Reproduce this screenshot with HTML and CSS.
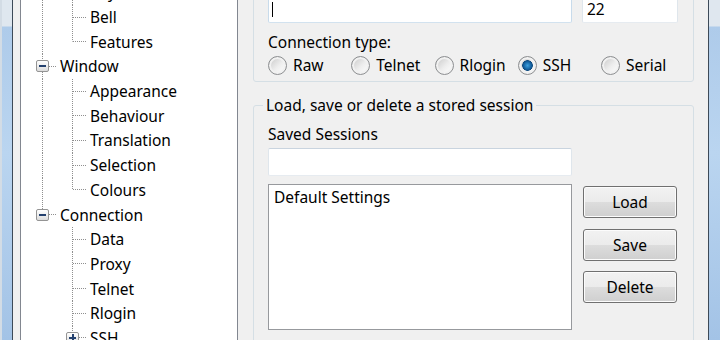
FILE: index.html
```html
<!DOCTYPE html>
<html lang="en">

<head>
    <meta charset="UTF-8">
    <meta name="viewport" content="width=device-width, initial-scale=1.0">
    <title>PuTTY Configuration</title>
    <link rel="stylesheet" href="styles.css">
</head>

<body>
    <div class="window">
        <div class="frame frame-left"></div>
        <div class="dialog">
            <ul class="tree">
                <li class="row"><span class="ln i"></span><span class="ln t"></span><span class="label">Keyboard</span></li>
                <li class="row"><span class="ln i"></span><span class="ln t"></span><span class="label">Bell</span></li>
                <li class="row"><span class="ln i"></span><span class="ln l"></span><span class="label">Features</span></li>
                <li class="row"><span class="ln t node"><span class="exp"></span></span><span class="label">Window</span></li>
                <li class="row"><span class="ln i"></span><span class="ln t"></span><span class="label">Appearance</span></li>
                <li class="row"><span class="ln i"></span><span class="ln t"></span><span class="label">Behaviour</span></li>
                <li class="row"><span class="ln i"></span><span class="ln t"></span><span class="label">Translation</span></li>
                <li class="row"><span class="ln i"></span><span class="ln t"></span><span class="label">Selection</span></li>
                <li class="row"><span class="ln i"></span><span class="ln l"></span><span class="label">Colours</span></li>
                <li class="row"><span class="ln l node"><span class="exp"></span></span><span class="label">Connection</span></li>
                <li class="row"><span class="ln"></span><span class="ln t"></span><span class="label">Data</span></li>
                <li class="row"><span class="ln"></span><span class="ln t"></span><span class="label">Proxy</span></li>
                <li class="row"><span class="ln"></span><span class="ln t"></span><span class="label">Telnet</span></li>
                <li class="row"><span class="ln"></span><span class="ln t"></span><span class="label">Rlogin</span></li>
                <li class="row"><span class="ln"></span><span class="ln t node"><span class="exp closed"></span></span><span class="label">SSH</span></li>
                <li class="row"><span class="ln"></span><span class="ln l"></span><span class="label">Serial</span></li>
            </ul>

            <div class="config">
                <div class="group">
                    <div class="fields">
                        <div class="field host"><span class="caret"></span></div>
                        <div class="field port">22</div>
                    </div>
                    <div class="caption">Connection type:</div>
                    <div class="radios">
                        <label class="opt"><span class="radio"></span>Raw</label>
                        <label class="opt"><span class="radio"></span>Telnet</label>
                        <label class="opt"><span class="radio"></span>Rlogin</label>
                        <label class="opt"><span class="radio on"></span>SSH</label>
                        <label class="opt"><span class="radio"></span>Serial</label>
                    </div>
                </div>

                <fieldset class="group sessions">
                    <legend>Load, save or delete a stored session</legend>
                    <div class="caption">Saved Sessions</div>
                    <div class="field"></div>
                    <div class="session-row">
                        <ul class="list">
                            <li>Default Settings</li>
                        </ul>
                        <div class="buttons">
                            <button>Load</button>
                            <button>Save</button>
                            <button>Delete</button>
                        </div>
                    </div>
                </fieldset>
            </div>
        </div>
        <div class="frame frame-right"></div>
    </div>
</body>

</html>
```

FILE: styles.css
```css
body {
    font-family: 'Noto Sans', 'Open Sans', sans-serif;
    font-size: 15.5px;
    color: #000;
    margin: 0;
    width: 720px;
    height: 340px;
    overflow: hidden;
    background: #f0f0f0;
}

.window {
    display: flex;
    height: 340px;
}

/* aero glass edges of the window */
.frame {
    flex: none;
    background: linear-gradient(to bottom, #dfe7ef 0, #dfe7ef 26px, #aecbea 27px, #bad5f0 45%, #a3c3e6 100%);
}

.frame-left {
    width: 12px;
    border-right: 1px solid #3d4a58;
    box-shadow: inset 2px 0 #d3dce5;
}

.frame-right {
    width: 11px;
    border-left: 1px solid #3d4a58;
}

.dialog {
    flex: 1;
    display: flex;
    align-items: flex-start;
    padding-left: 7px;
    background: #f0f0f0;
}

/* category tree */
.tree {
    --dot-v: repeating-linear-gradient(to bottom, #8f8f8f 0 1px, transparent 1px 2px);
    --dot-h: repeating-linear-gradient(to right, #8f8f8f 0 1px, transparent 1px 2px);
    box-sizing: border-box;
    width: 218px;
    height: 420px;
    margin: -21px 0 0;
    padding: 0 0 0 6px;
    list-style: none;
    background: #fff;
    border: 1px solid #828790;
}

.row {
    display: flex;
    align-items: center;
    height: 24.7px;
}

.ln {
    flex: none;
    display: flex;
    align-items: center;
    width: 30px;
    height: 100%;
}

.ln.i {
    background: var(--dot-v) 15px 0 / 1px 100% no-repeat;
}

.ln.t {
    background: var(--dot-v) 15px 0 / 1px 100% no-repeat, var(--dot-h) 16px 50% / 14px 1px no-repeat;
}

.ln.l {
    background: var(--dot-v) 15px 0 / 1px 50% no-repeat, var(--dot-h) 16px 50% / 14px 1px no-repeat;
}

.ln.node {
    background-size: 1px 100%, 8px 1px;
    background-position: 15px 0, 22px 50%;
}

.ln.l.node {
    background-size: 1px 50%, 8px 1px;
}

.exp {
    box-sizing: border-box;
    width: 13px;
    height: 12px;
    margin-left: 9px;
    border: 1px solid #949494;
    border-radius: 2px;
    background:
        linear-gradient(#23406e, #23406e) center / 7px 2px no-repeat,
        linear-gradient(#ffffff, #dcdcdc);
}

.exp.closed {
    background:
        linear-gradient(#23406e, #23406e) center / 7px 2px no-repeat,
        linear-gradient(#23406e, #23406e) center / 2px 7px no-repeat,
        linear-gradient(#ffffff, #dcdcdc);
}

.label {
    margin-left: 3px;
    line-height: 20px;
    white-space: nowrap;
}

/* right hand panel */
.config {
    flex: none;
    width: 441px;
    margin: -20px 0 0 15px;
}

.group {
    border: 1px solid #d5dfe5;
    border-radius: 3px;
    padding: 14px 14px 6px;
}

.fields {
    display: flex;
    gap: 10px;
}

.field {
    box-sizing: border-box;
    display: flex;
    align-items: center;
    height: 28px;
    padding: 0 4px;
    background: #fff;
    border: 1px solid;
    border-color: #c9d4df #dfe6ec #e6ebf0 #dfe6ec;
    border-radius: 2px;
}

.field.host {
    width: 304px;
    padding-left: 3px;
    border-color: #b6cde2 #c8dbeb #d2e2ef #c8dbeb;
}

.field.port {
    width: 96px;
}

.caret {
    width: 1px;
    height: 15px;
    background: #000;
}

.caption {
    line-height: 20px;
    margin-top: 9px;
}

.radios {
    display: grid;
    grid-template-columns: repeat(4, 83.25px) auto;
    margin-top: 3px;
}

.opt {
    display: flex;
    align-items: center;
    gap: 6px;
    height: 20px;
}

.radio {
    box-sizing: border-box;
    width: 19px;
    height: 19px;
    border-radius: 50%;
    border: 1px solid #8c8e90;
    background: linear-gradient(135deg, #c6c6c6, #eeeeee 55%, #ffffff);
    box-shadow: inset 0 0 0 2px #f1f1f1;
}

.radio.on {
    background:
        radial-gradient(circle at 50% 50%, #3d9fdc 0, #1b6fb0 3px, #0f4c82 5px, transparent 5.6px),
        linear-gradient(135deg, #c6c6c6, #eeeeee 55%, #ffffff);
}

.sessions {
    margin: 13px 0 0;
    min-width: 0;
    padding: 9px 14px 14px;
}

.sessions legend {
    margin-left: -5px;
    padding: 0 3px;
    line-height: 20px;
}

.sessions .caption {
    margin-top: 0;
}

.sessions .field {
    margin-top: 4px;
    width: 304px;
}

.session-row {
    display: flex;
    gap: 11px;
    margin-top: 8px;
}

.list {
    box-sizing: border-box;
    width: 304px;
    height: 146px;
    margin: 0;
    padding: 2px 5px;
    list-style: none;
    background: #fff;
    border: 1px solid #97999d;
    line-height: 20px;
}

.buttons {
    display: flex;
    flex-direction: column;
    gap: 10.5px;
    margin-top: 2px;
}

button {
    width: 94px;
    height: 32px;
    font: inherit;
    color: #000;
    border: 1px solid #707070;
    border-radius: 3px;
    background: linear-gradient(#f2f2f2, #ebebeb 50%, #dddddd 50%, #cfcfcf);
    box-shadow: inset 0 0 0 1px #fcfcfc;
    padding: 0;
}
```
